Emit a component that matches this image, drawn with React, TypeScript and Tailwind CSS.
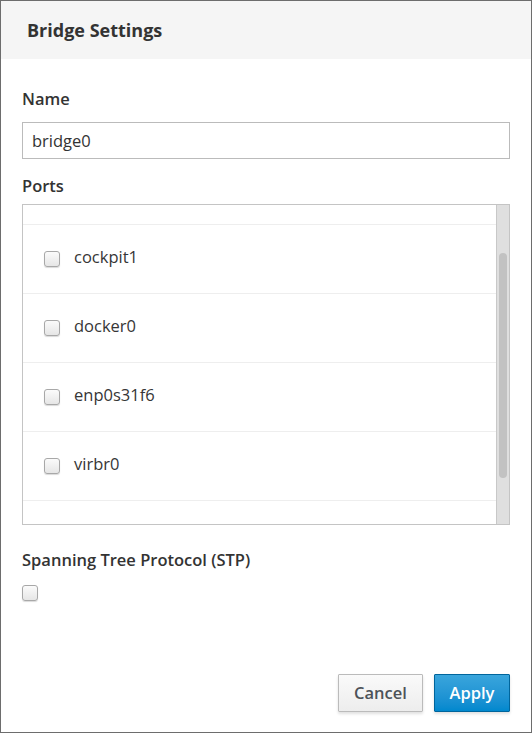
const PORTS = ['cockpit1', 'docker0', 'enp0s31f6', 'virbr0'];

function Box() {
  return (
    <span className="block h-[16px] w-[16px] shrink-0 rounded-[3px] border border-[#a8a8a8] bg-gradient-to-b from-[#fbfbfb] to-[#e6e6e6] shadow-[0_1px_1px_rgba(0,0,0,0.15)]" />
  );
}

export default function App() {
  return (
    <div
      className="flex h-[733px] w-[532px] flex-col border border-[#6d6d6d] bg-white text-[#363636]"
      style={{ fontFamily: '"Open Sans", "Liberation Sans", sans-serif' }}
    >
      <header className="flex h-[58px] items-center bg-[#f5f5f5] px-[26px]">
        <h1 className="text-[18px] font-bold text-[#333]">Bridge Settings</h1>
      </header>

      <main className="flex flex-1 flex-col px-[21px] pt-[28px]">
        <label className="text-[16.5px] font-semibold text-[#333]">Name</label>
        <input
          defaultValue="bridge0"
          className="mt-[10px] h-[37px] w-full border border-[#bbb] px-[9px] text-[16.5px] text-[#333] outline-none"
        />

        <label className="mt-[15px] text-[16.5px] font-semibold text-[#333]">Ports</label>
        <div className="mt-[5px] flex h-[321px] border border-[#c4c4c4]">
          <ul className="flex-1 overflow-hidden">
            <li className="h-[20px] border-b border-[#eeeeee]" />
            {PORTS.map((p) => (
              <li key={p} className="flex h-[69px] items-center gap-[14px] border-b border-[#eeeeee] pl-[21px]">
                <Box />
                <span className="-mt-[3px] text-[16.5px] text-[#363636]">{p}</span>
              </li>
            ))}
          </ul>
          <div className="flex w-[13px] justify-center border-l border-[#c8c8c8] bg-[#dfdfdf] pt-[48px]">
            <div className="h-[225px] w-[8px] rounded-full bg-[#c2c2c2]" />
          </div>
        </div>

        <label className="mt-[23px] text-[16.5px] font-semibold text-[#333]">Spanning Tree Protocol (STP)</label>
        <div className="mt-[13px]">
          <Box />
        </div>

        <div className="mt-auto flex justify-end gap-[11px] pb-[20px]">
          <button className="h-[38px] w-[85px] rounded-[1px] border border-[#bbb] bg-gradient-to-b from-[#fafafa] to-[#ededed] text-[16.5px] font-semibold text-[#4d5258] shadow-[0_2px_3px_rgba(0,0,0,0.12)]">
            Cancel
          </button>
          <button className="h-[38px] w-[76px] rounded-[1px] border border-[#00659c] bg-gradient-to-b from-[#39a5dc] to-[#0088ce] text-[16.5px] font-semibold text-white shadow-[0_2px_3px_rgba(0,0,0,0.12)]">
            Apply
          </button>
        </div>
      </main>
    </div>
  );
}
